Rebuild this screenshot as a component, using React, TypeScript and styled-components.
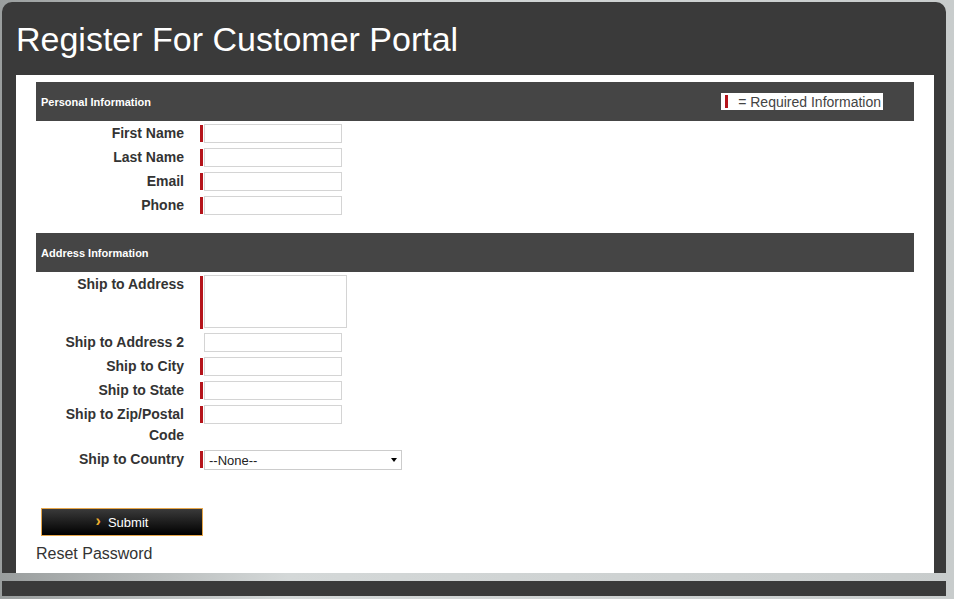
import React from 'react'
import styled, { createGlobalStyle } from 'styled-components'

const Global = createGlobalStyle`
    html, body { margin: 0; padding: 0; }
    body {
        background: linear-gradient(90deg, #9a9e9e 0%, #d4d8d8 30%, #c8cccc 100%);
        font-family: Arial, "Liberation Sans", sans-serif;
        height: 599px;
        overflow: hidden;
    }
`

type Field = { label: string; required?: boolean; kind?: 'text' | 'area' | 'select' }

const personal: Field[] = [
    { label: 'First Name', required: true },
    { label: 'Last Name', required: true },
    { label: 'Email', required: true },
    { label: 'Phone', required: true },
]

const address: Field[] = [
    { label: 'Ship to Address', required: true, kind: 'area' },
    { label: 'Ship to Address 2' },
    { label: 'Ship to City', required: true },
    { label: 'Ship to State', required: true },
    { label: 'Ship to Zip/Postal Code', required: true },
    { label: 'Ship to Country', required: true, kind: 'select' },
]

const FormRows = ({ fields }: { fields: Field[] }) => (
    <Rows>
        {fields.map((f) => (
            <Row key={f.label}>
                <Label>{f.label}</Label>
                <Control>
                    <ReqBar $on={!!f.required} $tall={f.kind === 'area'} />
                    {f.kind === 'area' ? (
                        <Area />
                    ) : f.kind === 'select' ? (
                        <Select>
                            <span>--None--</span>
                            <Caret />
                        </Select>
                    ) : (
                        <Input />
                    )}
                </Control>
            </Row>
        ))}
    </Rows>
)

const App = () => (
    <>
        <Global />
        <Frame>
            <Title>Register For Customer Portal</Title>
            <Panel>
                <SectionHead>
                    Personal Information
                    <Legend>
                        <LegendBar />= Required Information
                    </Legend>
                </SectionHead>
                <FormRows fields={personal} />
                <SectionHead $spaced>Address Information</SectionHead>
                <FormRows fields={address} />
                <SubmitBtn>
                    <Chevron>›</Chevron>Submit
                </SubmitBtn>
                <ResetLink>Reset Password</ResetLink>
            </Panel>
            <Strip />
            <Footer />
        </Frame>
    </>
)

export default App

const Frame = styled.div`
    margin: 2px 8px 0 2px;
    background: #3a3a3a;
    border-radius: 10px 10px 0 0;
    display: flex;
    flex-direction: column;
`

const Title = styled.h1`
    margin: 0;
    height: 73px;
    padding-left: 14px;
    display: flex;
    align-items: center;
    color: #fff;
    font-size: 34px;
    font-weight: normal;
    padding-top: 2px;
    box-sizing: border-box;
`

const Panel = styled.div`
    background: #fff;
    margin: 0 12px 0 14px;
    padding: 7px 20px 0 20px;
    height: 498px;
    box-sizing: border-box;
    display: flex;
    flex-direction: column;
`

const SectionHead = styled.div<{ $spaced?: boolean }>`
    height: 39px;
    background: #454545;
    color: #fff;
    font-size: 11px;
    font-weight: bold;
    display: flex;
    align-items: center;
    justify-content: space-between;
    padding: 0 31px 0 5px;
    margin-top: ${(p) => (p.$spaced ? '17px' : '0')};
`

const Legend = styled.div`
    background: #fff;
    color: #444;
    font-size: 14px;
    font-weight: normal;
    height: 17px;
    padding: 0 2px 0 4px;
    display: flex;
    align-items: center;
`

const LegendBar = styled.span`
    width: 3px;
    height: 13px;
    background: #b5141b;
    margin-right: 10px;
`

const Rows = styled.div`
    display: flex;
    flex-direction: column;
    gap: 3px;
    padding-top: 2px;
`

const Row = styled.div`
    display: grid;
    grid-template-columns: 148px auto;
    column-gap: 16px;
    align-items: start;
    min-height: 20px;
`

const Label = styled.div`
    text-align: right;
    font-size: 14px;
    font-weight: bold;
    color: #333;
    line-height: 21px;
`

const Control = styled.div`
    display: flex;
    align-items: flex-start;
    padding-top: 1px;
`

const ReqBar = styled.span<{ $on: boolean; $tall: boolean }>`
    width: 3px;
    height: ${(p) => (p.$tall ? '53px' : '17px')};
    background: ${(p) => (p.$on ? '#b5141b' : 'transparent')};
    margin-right: 1px;
    margin-top: 1px;
`

const Input = styled.div`
    width: 136px;
    height: 17px;
    border: 1px solid #d4d4d4;
    background: #fff;
`

const Area = styled(Input)`
    width: 141px;
    height: 51px;
`

const Select = styled.div`
    width: 188px;
    height: 18px;
    border: 1px solid #ccc;
    display: flex;
    align-items: center;
    justify-content: space-between;
    padding: 0 4px 0 4px;
    font-size: 13px;
    color: #222;
`

const Caret = styled.span`
    width: 0;
    height: 0;
    border-left: 3.5px solid transparent;
    border-right: 3.5px solid transparent;
    border-top: 4px solid #000;
`

const SubmitBtn = styled.button`
    margin: 38px 0 0 5px;
    width: 162px;
    height: 28px;
    border: 1px solid #e6a64a;
    background: linear-gradient(#3a3a3a, #000);
    color: #fff;
    font-family: Arial, "Liberation Sans", sans-serif;
    font-size: 13px;
    display: flex;
    align-items: center;
    justify-content: center;
    gap: 7px;
`

const Chevron = styled.span`
    color: #f0b030;
    font-size: 16px;
    font-weight: bold;
    margin-top: -3px;
`

const ResetLink = styled.div`
    margin-top: 9px;
    font-size: 16px;
    color: #333;
`

const Strip = styled.div`
    height: 8px;
    background: linear-gradient(90deg, #9a9e9e, #d4d8d8 30%, #c8cccc);
    margin: 0 -8px 0 0;
`

const Footer = styled.div`
    height: 15px;
    background: #3a3a3a;
    border-radius: 0 0 0 8px;
`
